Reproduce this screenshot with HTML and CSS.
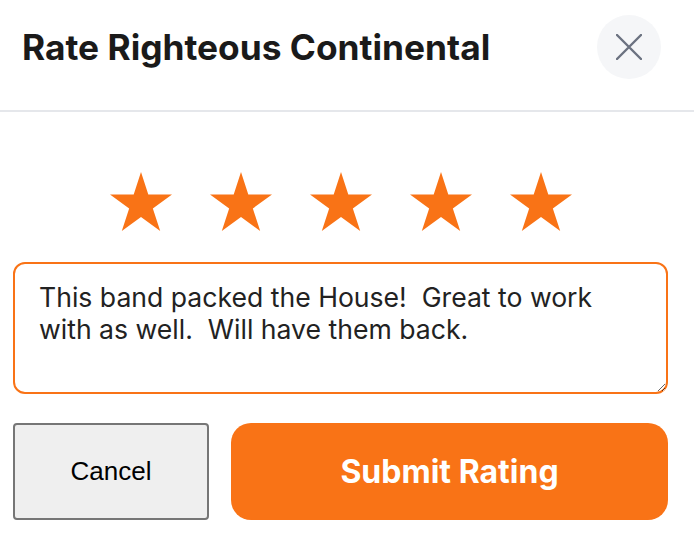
FILE: index.html
```html
<!DOCTYPE html>
<html lang="en">
<head>
  <meta charset="UTF-8">
  <title>Rate Righteous Continental</title>
  <link rel="stylesheet" href="styles.css">
</head>
<body>
  <div class="modal">
    <div class="modal-header">
      <h1>Rate Righteous Continental</h1>
      <button class="close-btn" aria-label="Close">
        <svg width="26" height="26" viewBox="0 0 26 26">
          <path d="M1 1 L25 25 M25 1 L1 25" stroke="#6b7280" stroke-width="2.4" stroke-linecap="round" fill="none"/>
        </svg>
      </button>
    </div>

    <div class="modal-body">
      <div class="stars" id="stars"></div>

      <textarea class="comment">This band packed the House!  Great to work with as well.  Will have them back.</textarea>

      <div class="actions">
        <button class="cancel-btn">Cancel</button>
        <button class="submit-btn">Submit Rating</button>
      </div>
    </div>
  </div>

  <script>
    // 星を5つ描く
    const starPoints = '31,0 38.3,22.5 62,22.5 42.84,36.45 50.2,59 31,45.05 11.8,59 19.16,36.45 0,22.5 23.7,22.5';
    const stars = document.getElementById('stars');
    for (let i = 0; i < 5; i++) {
      stars.innerHTML += '<svg class="star" width="62" height="60" viewBox="0 0 62 60"><polygon points="' + starPoints + '"/></svg>';
    }
  </script>
</body>
</html>
```

FILE: styles.css
```css
body {
  margin: 0;
  background: #ffffff;
  font-family: 'Inter', 'Roboto', sans-serif;
}

.modal-header {
  display: flex;
  align-items: center;
  justify-content: space-between;
  height: 112px;
  padding: 0 33px 0 22px;
  border-bottom: 2px solid #e5e7eb;
  box-sizing: border-box;
}

.modal-header h1 {
  margin: -16px 0 0 0;
  font-size: 35.3px;
  font-weight: 700;
  color: #1a1a1a;
}

.close-btn {
  width: 64px;
  height: 64px;
  border: none;
  border-radius: 50%;
  background: #f5f6f8;
  display: flex;
  align-items: center;
  justify-content: center;
  padding: 0;
  margin-top: -16px;
}

.modal-body {
  padding: 60px 26px 0 13px;
}

.stars {
  display: flex;
  justify-content: center;
  gap: 38px;
  height: 60px;
}

.star {
  fill: #f97316;
}

.comment {
  display: block;
  width: 100%;
  height: 132px;
  box-sizing: border-box;
  margin-top: 30px;
  padding: 17px 24px 16px;
  border: 2px solid #f97316;
  border-radius: 12px;
  font-family: 'Inter', 'Roboto', sans-serif;
  font-size: 26.6px;
  line-height: 32px;
  color: #222222;
  outline: none;
}

.actions {
  display: flex;
  gap: 22px;
  margin-top: 29px;
}

.cancel-btn {
  width: 196px;
  height: 97px;
  background: #efefef;
  border: 2px solid #767676;
  border-radius: 4px;
  font-family: 'Liberation Sans', Arial, sans-serif;
  font-size: 26px;
  color: #000000;
}

.submit-btn {
  flex: 1;
  height: 97px;
  background: #f97316;
  border: none;
  border-radius: 20px;
  font-family: 'Inter', 'Roboto', sans-serif;
  font-size: 32px;
  font-weight: 700;
  color: #ffffff;
}
```
